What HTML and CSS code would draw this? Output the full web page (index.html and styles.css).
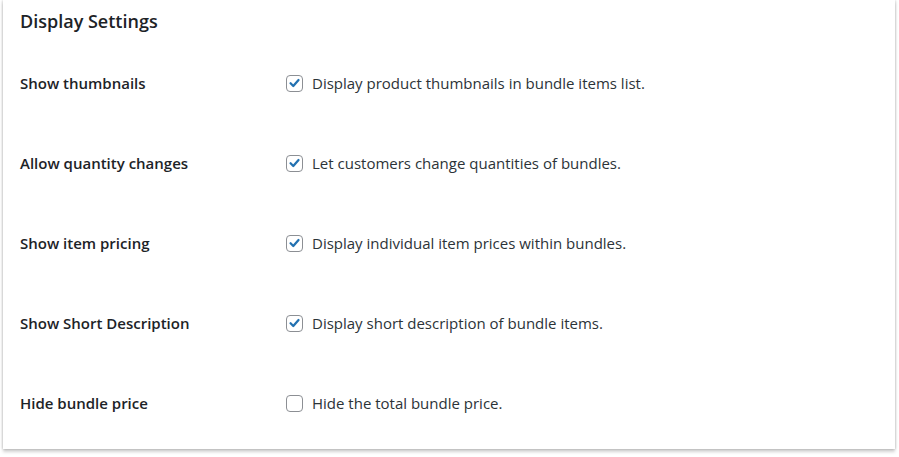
FILE: index.html
```html
<!DOCTYPE html>
<html>
<head>
<meta charset="utf-8">
<link rel="stylesheet" href="styles.css">
</head>
<body>
<div class="card">
  <h2 class="title">Display Settings</h2>
  <div class="rows">
    <div class="row">
      <div class="label">Show thumbnails</div>
      <label class="field"><span class="cb checked"><svg viewBox="0 0 16 16"><path d="M3.8 8.3 L6.7 11.2 L12.3 4.8"/></svg></span><span class="desc">Display product thumbnails in bundle items list.</span></label>
    </div>
    <div class="row">
      <div class="label">Allow quantity changes</div>
      <label class="field"><span class="cb checked"><svg viewBox="0 0 16 16"><path d="M3.8 8.3 L6.7 11.2 L12.3 4.8"/></svg></span><span class="desc">Let customers change quantities of bundles.</span></label>
    </div>
    <div class="row">
      <div class="label">Show item pricing</div>
      <label class="field"><span class="cb checked"><svg viewBox="0 0 16 16"><path d="M3.8 8.3 L6.7 11.2 L12.3 4.8"/></svg></span><span class="desc">Display individual item prices within bundles.</span></label>
    </div>
    <div class="row">
      <div class="label">Show Short Description</div>
      <label class="field"><span class="cb checked"><svg viewBox="0 0 16 16"><path d="M3.8 8.3 L6.7 11.2 L12.3 4.8"/></svg></span><span class="desc">Display short description of bundle items.</span></label>
    </div>
    <div class="row">
      <div class="label">Hide bundle price</div>
      <label class="field"><span class="cb"></span><span class="desc">Hide the total bundle price.</span></label>
    </div>
  </div>
</div>
</body>
</html>
```

FILE: styles.css
```css
html, body {
  margin: 0;
  padding: 0;
  background: #ffffff;
}
body {
  font-family: "Open Sans", "Noto Sans", sans-serif;
  color: #1d2327;
  padding: 0 4px 8px 3px;
  min-height: 457px;
  box-sizing: border-box;
}
.card {
  background: #fff;
  box-shadow: -1px 0 2px rgba(0,0,0,0.12), 1px 0 2px rgba(0,0,0,0.12), 0 3px 3px rgba(0,0,0,0.18);
  padding: 8px 0 0 17px;
  height: 449px;
  box-sizing: border-box;
}
.title {
  margin: 0;
  font-size: 18px;
  font-weight: 600;
  line-height: 26px;
}
.rows {
  margin-top: 9px;
}
.row {
  display: grid;
  grid-template-columns: 266px 1fr;
  align-items: center;
  height: 80px;
}
.label {
  font-size: 15px;
  font-weight: 600;
  line-height: 22px;
  color: #1d2327;
}
.field {
  display: flex;
  align-items: center;
  gap: 9px;
  font-size: 15px;
  line-height: 22px;
  color: #2c3338;
}
.cb {
  width: 17px;
  height: 17px;
  box-sizing: border-box;
  border: 1.5px solid #8c8f94;
  border-radius: 4px;
  display: flex;
  align-items: center;
  justify-content: center;
}
.cb svg {
  width: 16px;
  height: 16px;
}
.cb svg path {
  fill: none;
  stroke: #2271b1;
  stroke-width: 2.4;
  stroke-linecap: round;
  stroke-linejoin: round;
}
```
